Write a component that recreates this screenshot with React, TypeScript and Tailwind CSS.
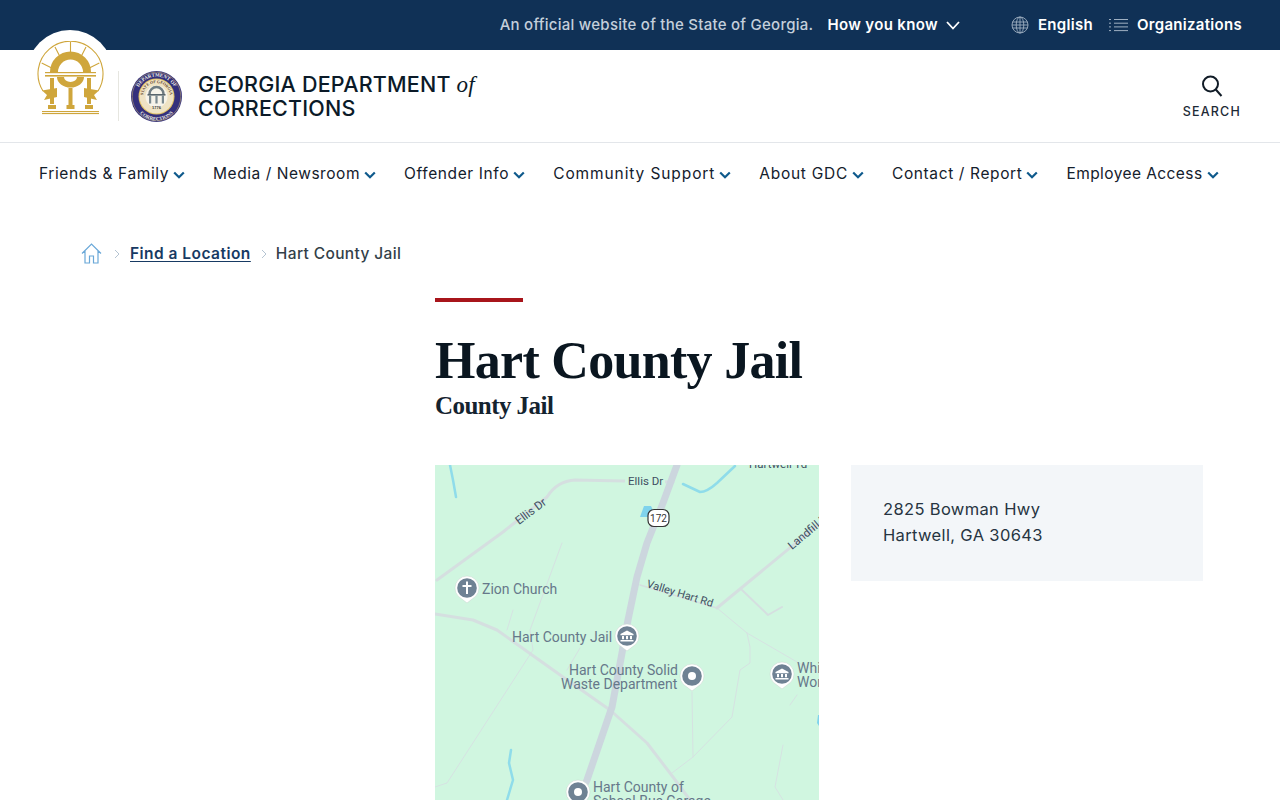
import React from "react";

const sans = { fontFamily: "Inter, 'Noto Sans', sans-serif" };

function Pin({ x, y, kind }: { x: number; y: number; kind: "cross" | "gov" | "dot" }) {
  return (
    <g transform={`translate(${x} ${y})`}>
      <path d="M0 15L-8.6 8.4A12 12 0 1 1 8.6 8.4Z" fill="#fff" stroke="#c4d4cc" strokeWidth="0.5" strokeLinejoin="round" />
      <circle r="9.8" fill="#6f8294" />
      {kind === "dot" && <circle r="4" fill="#fff" />}
      {kind === "cross" && <path d="M-1 -6.5h2v3.5h3.5v2H1v7h-2v-7h-3.5v-2H-1z" fill="#fff" />}
      {kind === "gov" && <path d="M0 -5.5 L6.5 -2 V-.8 H-6.5 V-2 Z M-5 0h2v3.2h-2z M-1 0h2v3.2h-2z M3 0h2v3.2h-2z M-6.5 4h13v1.5h-13z" fill="#fff" />}
    </g>
  );
}

function MapArt() {
  const label = { fontFamily: "Roboto, sans-serif" };
  return (
    <svg viewBox="0 0 384 384" className="block w-full h-full" style={label}>
      <rect width="384" height="384" fill="#d0f6e0" />
      <g fill="none" stroke="#d6e2e2" strokeLinejoin="round" strokeLinecap="round">
        <g strokeWidth="1">
          <path d="M127 78L95 165L98 185L12 318L0 322" />
          <path d="M78 145L72 165" />
          <path d="M145 183L132 205" />
          <path d="M282 143L312 168L362 197L384 208" />
          <path d="M312 168L315 182L315 198L305 205L297 252L258 292L237 308" />
          <path d="M257 227L258 292" />
          <path d="M348 280L340 322L348 335" />
          <path d="M362 230L355 240" />
        </g>
        <g strokeWidth="2" stroke="#d5dfe0">
          <path d="M307 125L333 150L347 142" />
        </g>
        <g strokeWidth="3" stroke="#d5dfe0">
          <path d="M2 115L68 67L112 32Q122 16 140 15L238 17" />
          <path d="M385 58L282 143" />
          <path d="M205 120L282 143" strokeWidth="1.5" />
          <path d="M0 149L38 155L62 165L128 212L175 245L212 278L238 312L255 335" />
        </g>
        <path d="M242 0L228 38L212 78L202 112L193 155L187 188L177 242L152 315L135 350" stroke="#ccd6de" strokeWidth="7" />
        <g stroke="#8fdcea" strokeWidth="2.5">
          <path d="M15 0L18 15L21 32" />
          <path d="M248 19L265 27Q272 27 282 18L300 1" />
          <path d="M76 285L74 298L78 315L72 335L72 350" />
        </g>
      </g>
      <path d="M205 52L209 41L216 41L219 47L213 52Z" fill="#7fd3ec" />
      <path d="M383 250L384 250V261L382 258Z" fill="#7fd3ec" />
      <g fill="#3f4e62" fontSize="11.5">
        <rect x="190" y="8" width="40" height="14" fill="#d0f6e0" />
        <text x="193" y="20">Ellis Dr</text>
        <text transform="translate(84 60) rotate(-37)">Ellis Dr</text>
        <text transform="translate(0 120) rotate(-37)" x="-14">Dr</text>
        <text transform="translate(211 122) rotate(17)" fontSize="11">Valley Hart Rd</text>
        <text transform="translate(357 85) rotate(-40)">Landfill Rd</text>
        <text x="314" y="3">Hartwell Td</text>
      </g>
      <rect x="213" y="44.5" width="21" height="17" rx="6" fill="#fff" stroke="#333" strokeWidth="1.2" />
      <text x="223.5" y="57" fontSize="10" textAnchor="middle" fill="#333">172</text>
      <g fill="#66788a" fontSize="14">
        <text x="47" y="129">Zion Church</text>
        <text x="77" y="177">Hart County Jail</text>
        <text x="134" y="210">Hart County Solid</text>
        <text x="126" y="224">Waste Department</text>
        <text x="362" y="208">Whi</text>
        <text x="362" y="222">Wor</text>
        <text x="158" y="327">Hart County of</text>
        <text x="158" y="341">School Bus Garage</text>
      </g>
      <Pin x={32} y={123} kind="cross" />
      <Pin x={192} y={171} kind="gov" />
      <Pin x={257} y={211} kind="dot" />
      <Pin x={347} y={209} kind="gov" />
      <Pin x={143} y={327} kind="dot" />
    </svg>
  );
}

function CapitolLogo() {
  return (
    <svg width="67" height="75" viewBox="0 0 67 75" className="block" fill="none">
      <g stroke="#cfa63c">
        <path d="M6 50A32.5 32.5 0 1 1 61 50" strokeWidth="1.1" />
        <path d="M33.5 1V13M18 6L23 15.7M49 6L44 15.7M4.7 22L14.7 27M62.3 22L52.3 27" strokeWidth="1.1" />
        <path d="M17 31A16.5 16.5 0 0 1 50 31" strokeWidth="8" />
      </g>
      <g fill="#cfa63c">
        <rect x="8" y="31" width="51" height="1.2" />
        <rect x="8" y="34" width="51" height="1.6" />
        <path d="M20 36H27A6.5 5 0 0 0 40 36H47A13.5 10.5 0 0 1 20 36Z" />
        <rect x="13" y="37" width="4" height="26" />
        <rect x="31.5" y="47" width="4" height="17" />
        <rect x="50" y="37" width="4" height="26" />
        <path d="M5 49.5L20 47V56L7 59L10 54Z" />
        <path d="M62 49.5L47 47V56L60 59L57 54Z" />
        <rect x="11" y="64" width="8" height="4" />
        <rect x="29.5" y="64" width="8" height="4" />
        <rect x="48" y="64" width="8" height="4" />
        <rect x="5" y="70" width="57" height="1.1" />
        <rect x="5" y="72" width="57" height="1.1" />
      </g>
    </svg>
  );
}

function Seal() {
  return (
    <svg width="51" height="51" viewBox="0 0 51 51" className="block">
      <circle cx="25.5" cy="25.5" r="25.5" fill="#34307c" />
      <circle cx="25.5" cy="25.5" r="24.3" fill="none" stroke="#c9b36a" strokeWidth="0.5" />
      <circle cx="25.5" cy="25.5" r="18" fill="#e0c163" />
      <circle cx="25.5" cy="25.5" r="17" fill="#efe3c4" />
      <circle cx="25.5" cy="25.5" r="11" fill="#f7f4ea" />
      <defs>
        <path id="sealTop" d="M5.5 25.5A20 20 0 0 1 45.5 25.5" />
        <path id="sealBottom" d="M3 27A22.5 22.5 0 0 0 48 27" />
        <path id="sealInner" d="M12 25.5A13.5 13.5 0 0 1 39 25.5" />
      </defs>
      <text fontSize="5" fill="#f2f0e0" fontFamily="'Liberation Serif', serif" fontWeight="700">
        <textPath href="#sealTop" startOffset="50%" textAnchor="middle">DEPARTMENT OF</textPath>
      </text>
      <text fontSize="5" fill="#f2f0e0" fontFamily="'Liberation Serif', serif" fontWeight="700">
        <textPath href="#sealBottom" startOffset="50%" textAnchor="middle">CORRECTIONS</textPath>
      </text>
      <text fontSize="4" fill="#5a3a24" fontFamily="'Liberation Serif', serif" fontWeight="700">
        <textPath href="#sealInner" startOffset="50%" textAnchor="middle">STATE OF GEORGIA</textPath>
      </text>
      <path d="M18.5 23A7 7 0 0 1 32.5 23" fill="none" stroke="#6f7c82" strokeWidth="2.5" />
      <rect x="16.5" y="23" width="18" height="1.6" fill="#59666c" />
      <rect x="18" y="24.5" width="2.2" height="8" fill="#7b8a90" />
      <rect x="24.4" y="24.5" width="2.2" height="8" fill="#7b8a90" />
      <rect x="30.8" y="24.5" width="2.2" height="8" fill="#7b8a90" />
      <text x="25.5" y="38" fontSize="4" textAnchor="middle" fill="#333" fontWeight="700" fontFamily="'Liberation Sans', sans-serif">1776</text>
    </svg>
  );
}

function Chevron() {
  return (
    <svg width="12" height="8" viewBox="0 0 12 8" fill="none" className="shrink-0 mt-[2px]">
      <path d="M1.2 1.5L6 6.2L10.8 1.5" stroke="#0f5a8c" strokeWidth="2.2" />
    </svg>
  );
}

const navItems = [
  { label: "Friends & Family", cls: "tracking-[0.6px]" },
  { label: "Media / Newsroom", cls: "tracking-[0.54px]" },
  { label: "Offender Info", cls: "tracking-[0.62px]" },
  { label: "Community Support", cls: "tracking-[0.9px]" },
  { label: "About GDC", cls: "tracking-[0.72px]" },
  { label: "Contact / Report", cls: "tracking-[0.62px]" },
  { label: "Employee Access", cls: "tracking-[0.42px]" },
];

export default function App() {
  return (
    <div className="relative h-screen overflow-hidden bg-white" style={sans}>
      <div className="h-[50px] bg-[#103156] flex items-center justify-end pr-[38px] text-[15px]">
        <span className="font-medium text-[#c4cfdb] tracking-[0.26px]">An official website of the State of Georgia.</span>
        <span className="ml-[14px] font-semibold text-white tracking-[0.35px]">How you know</span>
        <svg width="14" height="9" viewBox="0 0 14 9" fill="none" className="ml-[8px]"><path d="M1 1L7 7.5L13 1" stroke="#fff" strokeWidth="1.8" /></svg>
        <svg width="18" height="18" viewBox="0 0 18 18" fill="none" stroke="#9fb0c2" strokeWidth="0.9" className="ml-[51px]">
          <circle cx="9" cy="9" r="8" /><ellipse cx="9" cy="9" rx="3.8" ry="8" /><path d="M9 1V17M1.5 6H16.5M1.5 12H16.5M1 9H17" />
        </svg>
        <span className="ml-[9px] font-semibold text-white tracking-[0.3px]">English</span>
        <svg width="19" height="14" viewBox="0 0 19 14" fill="none" stroke="#9fb0c2" className="ml-[16px]">
          <path d="M5 1.5H19M5 5.2H19M5 8.9H19M5 12.6H19M0 1.5H2M0 5.2H2M0 8.9H2M0 12.6H2" />
        </svg>
        <span className="ml-[9px] font-semibold text-white tracking-[0.3px]">Organizations</span>
      </div>

      <div className="absolute left-[27px] top-[30px] w-[86px] h-[86px] rounded-full bg-white" />

      <header className="relative h-[93px] border-b border-[#e3e6ea] flex items-center pl-[37px] pr-[39px]">
        <div className="self-start -mt-[9px]"><CapitolLogo /></div>
        <div className="w-px h-[50px] bg-[#e6e6e0] ml-[14px]" />
        <div className="ml-[12px]"><Seal /></div>
        <div className="ml-[16px] text-[21.5px] leading-[24px] text-[#0b1a28] font-medium tracking-[0.2px]">
          GEORGIA DEPARTMENT <em className="font-['Liberation_Serif',serif] font-normal text-[23px] leading-none">of</em>
          <br />CORRECTIONS
        </div>
        <div className="ml-auto flex flex-col items-center mt-[1px]">
          <svg width="24" height="24" viewBox="0 0 24 24" fill="none" stroke="#111c27" strokeWidth="2"><circle cx="10.5" cy="10" r="7.5" /><path d="M15.8 15.5L21.5 22" /></svg>
          <span className="mt-[7px] text-[12.5px] font-medium tracking-[1.2px] text-[#1d2a36] leading-[14px]">SEARCH</span>
        </div>
      </header>

      <nav className="flex items-center gap-[28px] pl-[39px] h-[62px]">
        {navItems.map((n) => (
          <span key={n.label} className={`flex items-center gap-[4px] text-[15.5px] text-[#14202c] font-normal whitespace-nowrap ${n.cls}`}>
            {n.label}
            <Chevron />
          </span>
        ))}
      </nav>

      <div className="flex items-center pl-[81px] mt-[29px] h-[40px] text-[15.5px]">
        <svg width="21" height="21" viewBox="0 0 21 21" fill="none" stroke="#6aa8d8" strokeWidth="1.2" className="-mt-[2px]">
          <path d="M1 10.5L10.5 1L20 10.5M4 8V20H8.5V13H12.5V20H17V8" />
        </svg>
        <svg width="6" height="10" viewBox="0 0 6 10" fill="none" stroke="#b5c4d2" className="ml-[12px]"><path d="M1 1L5 5L1 9" /></svg>
        <span className="ml-[10px] font-semibold text-[#173a63] underline underline-offset-2 tracking-[0.47px]">Find a Location</span>
        <svg width="6" height="10" viewBox="0 0 6 10" fill="none" stroke="#b5c4d2" className="ml-[10px]"><path d="M1 1L5 5L1 9" /></svg>
        <span className="ml-[9px] font-medium text-[#333f49] tracking-[0.37px]">Hart County Jail</span>
      </div>

      <main className="ml-[435px] w-[768px] pt-[24px]">
        <div className="w-[88px] h-[4px] bg-[#a8151b]" />
        <h1 className="mt-[31px] text-[52px] leading-[56px] font-bold text-[#0a1620] font-['Liberation_Serif',serif] tracking-[-0.7px]">Hart County Jail</h1>
        <p className="mt-[1px] text-[25px] leading-[32px] font-bold text-[#14232f] font-['Liberation_Serif',serif] tracking-[-0.55px]">County Jail</p>
        <div className="mt-[43px] flex gap-[32px] items-start">
          <div className="w-[384px] h-[384px] shrink-0"><MapArt /></div>
          <div className="w-[352px] h-[116px] bg-[#f3f6f9] px-[32px] py-[31px] text-[16.5px] leading-[26px] text-[#263441] tracking-[0.35px]">
            2825 Bowman Hwy
            <br />Hartwell, GA 30643
          </div>
        </div>
      </main>
    </div>
  );
}
